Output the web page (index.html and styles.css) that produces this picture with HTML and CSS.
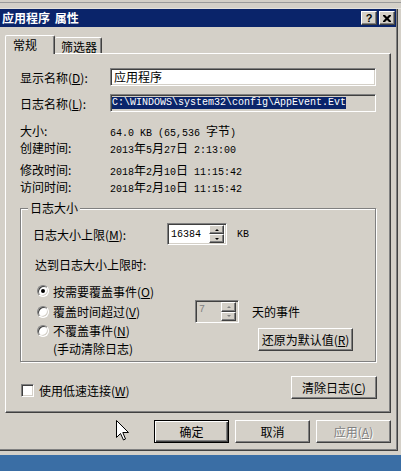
FILE: index.html
```html
<!DOCTYPE html>
<html lang="zh-CN">
<head>
<meta charset="utf-8">
<title>应用程序 属性</title>
<link rel="stylesheet" href="styles.css">
</head>
<body>
<div class="top-strip"></div>
<div class="window">
  <div class="titlebar">
    <span class="title">应用程序 属性</span>
    <div class="caption-btns">
      <div class="cap help">?</div>
      <div class="cap close">
        <svg width="8" height="7" viewBox="0 0 8 7"><path d="M0 0h2l2 2 2-2h2v1L5.5 3.5 8 6v1H6L4 5 2 7H0V6l2.5-2.5L0 1z" fill="#000"/></svg>
      </div>
    </div>
  </div>
  <div class="client">
    <div class="tabs">
      <div class="tab active">常规</div>
      <div class="tab">筛选器</div>
    </div>
    <div class="panel">
      <div class="fields">
        <span class="lbl">显示名称(<u>D</u>):</span>
        <div class="edit">应用程序</div>
        <span class="lbl">日志名称(<u>L</u>):</span>
        <div class="edit readonly"><span class="sel">C:\WINDOWS\system32\config\AppEvent.Evt</span></div>
      </div>
      <div class="info">
        <div class="info-row"><span class="lbl">大小:</span><span class="val">64.0 KB (65,536 <span class="cjk">字节</span>)</span></div>
        <div class="info-row"><span class="lbl">创建时间:</span><span class="val">2013<span class="cjk">年</span>5<span class="cjk">月</span>27<span class="cjk">日</span> 2:13:00</span></div>
        <div class="info-row gap"><span class="lbl">修改时间:</span><span class="val">2018<span class="cjk">年</span>2<span class="cjk">月</span>10<span class="cjk">日</span> 11:15:42</span></div>
        <div class="info-row"><span class="lbl">访问时间:</span><span class="val">2018<span class="cjk">年</span>2<span class="cjk">月</span>10<span class="cjk">日</span> 11:15:42</span></div>
      </div>
      <div class="group">
        <span class="legend">日志大小</span>
        <div class="limit-row">
          <span class="limit-lbl">日志大小上限(<u>M</u>):</span>
          <div class="spin">
            <span class="spin-text">16384</span>
            <div class="spin-btns">
              <div class="spin-btn"><i class="arr up"></i></div>
              <div class="spin-btn"><i class="arr down"></i></div>
            </div>
          </div>
          <span class="unit">KB</span>
        </div>
        <div class="reach">达到日志大小上限时:</div>
        <div class="options">
          <div class="opt"><span class="radio checked"></span><span>按需要覆盖事件(<u>O</u>)</span></div>
          <div class="c2"></div>
          <div class="c3"></div>
          <div class="opt"><span class="radio"></span><span>覆盖时间超过(<u>V</u>)</span></div>
          <div class="spin disabled small">
            <span class="spin-text">7</span>
            <div class="spin-btns">
              <div class="spin-btn"><i class="arr up"></i></div>
              <div class="spin-btn"><i class="arr down"></i></div>
            </div>
          </div>
          <div class="days">天的事件</div>
          <div class="opt multi"><span class="radio"></span><span class="two">不覆盖事件(<u>N</u>)<br>(手动清除日志)</span></div>
          <div class="c2"></div>
          <div class="c3"><div class="btn restore">还原为默认值(<u>R</u>)</div></div>
        </div>
      </div>
      <div class="bottom">
        <label class="chk"><span class="box"></span><span>使用低速连接(<u>W</u>)</span></label>
        <div class="btn clear">清除日志(<u>C</u>)</div>
      </div>
    </div>
    <div class="footer">
      <div class="btn default">确定</div>
      <div class="btn">取消</div>
      <div class="btn disabled">应用(<u>A</u>)</div>
    </div>
  </div>
</div>
<div class="desktop"></div>
<svg class="cursor" width="13" height="21" viewBox="0 0 13 21"><path d="M0.5 0.5V17.5L4.5 13.5L7.5 20L9.5 19L6.8 12.5H12.5Z" fill="#fff" stroke="#000" stroke-width="1"/></svg>
</body>
</html>
```

FILE: styles.css
```css
* { box-sizing: border-box; }
html, body { margin: 0; padding: 0; }
body {
  width: 401px;
  height: 471px;
  overflow: hidden;
  background: #d4d0c8;
  font: 12px "Noto Sans CJK SC", sans-serif;
  color: #000;
  position: relative;
  display: flex;
  flex-direction: column;
}
u { text-decoration: underline; text-underline-offset: 1px; }

.top-strip {
  height: 9px;
  flex: none;
  background: linear-gradient(#d4d0c8 0 2px, #9a9a9a 2px 3px, #d4d0c8 3px 8px, #e4e2dc 8px 9px);
}

.window {
  width: 398px;
  height: 442px;
  flex: none;
  background: #d4d0c8;
  border-right: 1px solid #404040;
  border-bottom: 1px solid #404040;
  box-shadow: inset -1px -1px #808080;
  display: flex;
  flex-direction: column;
}

.titlebar {
  height: 18px;
  flex: none;
  margin-right: 1px;
  background: #0a246a;
  display: flex;
  align-items: center;
  justify-content: space-between;
  padding: 0 1px 0 2px;
}
.title {
  color: #fff;
  font-weight: 700;
  font-size: 12px;
  line-height: 18px;
  word-spacing: 2px;
  white-space: pre;
}
.caption-btns { display: flex; gap: 2px; }
.cap {
  width: 16px;
  height: 14px;
  background: #d4d0c8;
  border: 1px solid;
  border-color: #fff #404040 #404040 #fff;
  box-shadow: inset -1px -1px #808080;
  display: flex;
  align-items: center;
  justify-content: center;
}
.cap.help {
  font: bold 11px "Liberation Sans", sans-serif;
  line-height: 12px;
}
.cap.close svg { display: block; }

.client {
  padding-left: 5px;
  width: 391px;
}
.tabs {
  display: flex;
  align-items: flex-end;
  height: 18px;
  margin-top: 8px;
  position: relative;
  z-index: 1;
}
.tab {
  background: #d4d0c8;
  border-top: 1px solid #fff;
  border-left: 1px solid #fff;
  border-right: 1px solid #404040;
  box-shadow: inset -1px 0 #808080;
  border-radius: 2px 2px 0 0;
}
.tab.active {
  width: 50px;
  height: 19px;
  margin-bottom: -1px;
  padding: 1px 0 0 7px;
  line-height: 16px;
}
.tab:not(.active) {
  width: 47px;
  height: 16px;
  padding: 2px 0 0 6px;
  line-height: 14px;
  border-left: none;
}

.panel {
  width: 386px;
  height: 360px;
  border: 1px solid;
  border-color: #fff #404040 #404040 #fff;
  box-shadow: inset -1px -1px #808080;
  padding: 14px 14px 13px 14px;
}

.fields {
  display: grid;
  grid-template-columns: 90px 266px;
  row-gap: 8px;
  align-items: center;
}
.lbl { white-space: nowrap; }
.edit {
  height: 18px;
  background: #fff;
  border: 1px solid;
  border-color: #808080 #fff #fff #808080;
  box-shadow: inset 1px 1px #404040, inset -1px -1px #d4d0c8;
  padding: 0 0 0 3px;
  line-height: 16px;
  white-space: nowrap;
  overflow: hidden;
}
.edit.readonly {
  background: #d4d0c8;
  padding-left: 1px;
  display: flex;
  align-items: center;
}
.sel {
  background: #0a246a;
  color: #fff;
  font: 10px "Liberation Mono", monospace;
  line-height: 12px;
  height: 12px;
}

.info { margin-top: 10px; }
.info-row {
  display: flex;
  align-items: center;
  height: 17px;
}
.info-row.gap { margin-top: 5px; }
.info-row .lbl { width: 90px; }
.val {
  font: 10px "Liberation Mono", "Noto Sans CJK SC", monospace;
  white-space: pre;
}
.cjk { font: 12px "Noto Sans CJK SC", sans-serif; }

.group {
  position: relative;
  margin-top: 13px;
  border: 1px solid #808080;
  box-shadow: inset 1px 1px #fff, 1px 1px #fff;
  padding: 14px 0 10px 12px;
}
.legend {
  position: absolute;
  top: -9px;
  left: 7px;
  padding: 0 2px;
  background: #d4d0c8;
  line-height: 16px;
}
.limit-row {
  display: flex;
  align-items: center;
  height: 22px;
}
.limit-lbl { width: 134px; white-space: nowrap; }
.unit {
  margin-left: 10px;
  font: 10px "Liberation Mono", monospace;
}

.spin {
  width: 60px;
  height: 22px;
  display: flex;
  background: #fff;
  border: 1px solid;
  border-color: #808080 #fff #fff #808080;
  box-shadow: inset 1px 1px #404040, inset -1px -1px #d4d0c8;
  padding: 1px 2px 1px 1px;
}
.spin.small {
  width: 44px;
  height: 23px;
}
.spin.disabled { background: #d4d0c8; }
.spin-text {
  flex: 1;
  padding-left: 2px;
  font: 10px "Liberation Mono", monospace;
  line-height: 20px;
}
.spin.disabled .spin-text { color: #808080; line-height: 16px; }
.spin-btns {
  width: 15px;
  display: flex;
  flex-direction: column;
}
.spin-btn {
  flex: 1;
  background: #d4d0c8;
  border: 1px solid;
  border-color: #fff #404040 #404040 #fff;
  box-shadow: inset -1px -1px #808080;
  display: flex;
  align-items: center;
  justify-content: center;
}
.arr {
  display: block;
  width: 0;
  height: 0;
  border-left: 2px solid transparent;
  border-right: 2px solid transparent;
}
.arr.up { border-bottom: 2px solid #000; }
.arr.down { border-top: 2px solid #000; }
.spin.disabled .arr.up { border-bottom-color: #808080; }
.spin.disabled .arr.down { border-top-color: #808080; }

.reach {
  margin-top: 12px;
  padding-left: 2px;
  line-height: 16px;
}
.options {
  margin-top: 9px;
  padding-left: 4px;
  display: grid;
  grid-template-columns: 158px 57px 1fr;
  grid-template-rows: 18px 23px 28px;
  align-items: center;
}
.opt {
  display: flex;
  align-items: center;
  gap: 4px;
  white-space: nowrap;
}
.opt.multi {
  align-self: start;
  align-items: flex-start;
  margin-top: -1px;
}
.opt.multi .radio { margin-top: 3px; }
.two { line-height: 17.5px; }
.radio {
  width: 12px;
  height: 12px;
  flex: none;
  border-radius: 50%;
  background: #fff;
  border: 1px solid;
  border-color: #808080 #fff #fff #808080;
  box-shadow: inset 1px 1px #404040, inset -1px -1px #d4d0c8;
  display: flex;
  align-items: center;
  justify-content: center;
}
.radio.checked::after {
  content: "";
  width: 4px;
  height: 4px;
  border-radius: 50%;
  background: #000;
}
.days { white-space: nowrap; }
.c3 { align-self: start; }
.btn {
  height: 23px;
  width: 75px;
  background: #d4d0c8;
  border: 1px solid;
  border-color: #fff #404040 #404040 #fff;
  box-shadow: inset -1px -1px #808080;
  display: flex;
  align-items: center;
  justify-content: center;
  white-space: nowrap;
  line-height: 16px;
}
.btn.restore {
  width: 95px;
  margin: 5px 0 0 6px;
}
.btn.default {
  border-color: #000;
  box-shadow: inset 1px 1px #fff, inset -1px -1px #404040, inset -2px -2px #808080;
}
.btn.disabled {
  color: #808080;
  text-shadow: 1px 1px #fff;
}

.bottom {
  display: flex;
  justify-content: space-between;
  align-items: flex-start;
  margin-top: 14px;
}
.chk {
  display: flex;
  align-items: center;
  gap: 5px;
  margin: 8px 0 0 1px;
  height: 13px;
}
.box {
  width: 13px;
  height: 13px;
  background: #fff;
  border: 1px solid;
  border-color: #808080 #fff #fff #808080;
  box-shadow: inset 1px 1px #404040, inset -1px -1px #d4d0c8;
}
.btn.clear {
  width: 86px;
  margin-right: -1px;
}

.footer {
  display: flex;
  justify-content: flex-end;
  gap: 6px;
  margin-top: 7px;
}

.desktop {
  flex: 1;
  margin-top: 4px;
  background: #3a6ea5;
}

.cursor {
  position: absolute;
  left: 116px;
  top: 420px;
}
```
